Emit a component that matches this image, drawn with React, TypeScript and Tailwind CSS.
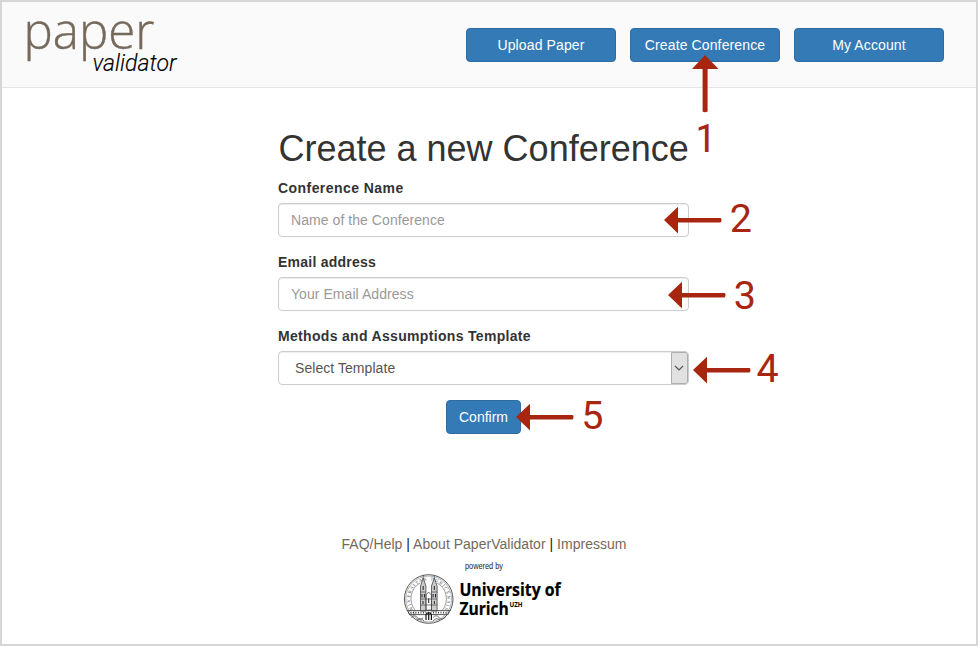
import React from "react";

const navItems = ["Upload Paper", "Create Conference", "My Account"];

function Brand() {
  return (
    <svg className="ml-[18px] mt-2 block h-[70px] w-[170px] overflow-visible" viewBox="20 10 170 70" aria-label="paper validator">
      <text x="23.5" y="49.3" fontSize="50" fontWeight="300" fontFamily="'Open Sans', sans-serif" fill="#75695c" stroke="#75695c" strokeWidth="0.4" textLength="131" lengthAdjust="spacingAndGlyphs">paper</text>
      <text x="92.5" y="71.3" fontSize="24.5" fontWeight="300" fontStyle="italic" fontFamily="Roboto, sans-serif" fill="#000" stroke="#000" strokeWidth="0.15" textLength="84" lengthAdjust="spacingAndGlyphs">validator</text>
    </svg>
  );
}

function Seal() {
  return (
    <g fill="none" stroke="#444">
      <circle cx="428.7" cy="599" r="24.3" strokeWidth="0.9" />
      <circle cx="428.7" cy="599" r="22.9" strokeWidth="0.4" />
      <path id="sealArc" d="M416.2 612.8A18.6 18.6 0 1 1 441.2 612.8" stroke="none" />
      <text fontSize="4.6" fontFamily="'Liberation Serif', serif" fill="#444" stroke="none">
        <textPath href="#sealArc" textLength="84">UNIVERSITAS TURICENSIS</textPath>
      </text>
      <path d="M415 610A18 18 0 0 1 420 583M437 583A18 18 0 0 1 442.5 610" strokeWidth="0.5" />
      <path d="M420.5 611V586l2.7-8 2.7 8v25zM431.5 611v-25l2.8-8 2.8 8v25z" fill="#ccc" strokeWidth="0.8" />
      <path d="M423.2 575v4M434.3 575v4M420.5 592h5.4M431.5 592h5.6M420.5 599h16.5M420.5 605h16.5M426 595l2.7-3 2.7 3v15h-5.4z" strokeWidth="0.7" />
      <path d="M423.2 586v4M434.3 586v4M422 594v3.5M424.4 594v3.5M433.1 594v3.5M435.5 594v3.5M428.7 598.5v4.5M423 601v3M434.3 601v3" stroke="#222" strokeWidth="1" />
      <path d="M406.8 610.6h43.8M409 614.6h39.4" strokeWidth="0.9" />
      <path d="M408 612.6h41.5" strokeWidth="1.8" strokeDasharray="1 1.5" />
      <path d="M411.3 617.5q3-3.5 6 0t6 0M433 617.5q3-3.5 6 0t7-1M417 620q4-3 7 1M433 621q3-4 7-1" strokeWidth="0.7" />
      <path d="M426 620v-5.5q2.7-4 5.4 0v5.5M428.7 612v8" stroke="#111" strokeWidth="1.2" />
    </g>
  );
}

function UniversityLogo() {
  return (
    <svg className="block h-[54px] w-[164px] overflow-visible" viewBox="402 572 164 54" aria-label="University of Zurich">
      <Seal />
      <g fill="#000" fontFamily="'Open Sans', sans-serif" fontWeight="700">
        <text x="459.4" y="596.3" fontSize="17.2" stroke="#000" strokeWidth="0.2" textLength="101.3" lengthAdjust="spacingAndGlyphs">University of</text>
        <text x="459.4" y="615" fontSize="17.2" stroke="#000" strokeWidth="0.2" textLength="49.5" lengthAdjust="spacingAndGlyphs">Zurich</text>
        <text x="509.5" y="606.6" fontSize="7" textLength="13" lengthAdjust="spacingAndGlyphs">UZH</text>
      </g>
    </svg>
  );
}

function Step({ n, className, numberX, numberY = 32.3 }: { n: number; className: string; numberX: number; numberY?: number }) {
  return (
    <svg className={`absolute h-10 w-[100px] overflow-visible ${className}`} viewBox="0 0 100 40" fill="#a82610">
      <path d="M0 20 L14 6.8V18H56.5Q57.5 18 57.5 20T56.5 22.4H14V33.4z" />
      <text x={numberX} y={numberY} fontSize="39.5" fontFamily="Roboto, sans-serif">{n}</text>
    </svg>
  );
}

function Field({ label, placeholder, tracking }: { label: string; placeholder: string; tracking: string }) {
  return (
    <label className="mb-[15px] block">
      <span className={`mb-[5px] block h-5 text-sm leading-5 font-bold ${tracking}`}>{label}</span>
      <input className="block h-[34px] w-full rounded border border-[#ccc] bg-white px-3 text-sm tracking-[0.06px] shadow-[inset_0_1px_1px_rgba(0,0,0,0.075)] placeholder:text-[#999]" placeholder={placeholder} />
    </label>
  );
}

export default function App() {
  return (
    <div className="relative h-[646px] w-[978px] overflow-hidden border-2 border-[#d6d6d6] bg-white font-['Liberation_Sans',Arial,sans-serif] text-[#333]">
      <header className="flex h-[86px] justify-between border-b border-[#e4e4e4] bg-[#fafafa] pr-8">
        <Brand />
        <nav className="flex gap-3.5 pt-[26px]">
          {navItems.map((item) => (
            <button key={item} className="h-[34px] w-[150px] rounded border border-[#2e6da4] bg-[#337ab7] text-sm tracking-[0.12px] text-white">{item}</button>
          ))}
        </nav>
      </header>

      <main className="ml-[276px] w-[411px] pt-[41px]">
        <h1 className="mb-[9px] h-10 pl-[0.5px] text-4xl leading-10 whitespace-nowrap">Create a new Conference</h1>
        <Field label="Conference Name" placeholder="Name of the Conference" tracking="tracking-[0.44px]" />
        <Field label="Email address" placeholder="Your Email Address" tracking="tracking-[0.24px]" />
        <div className="mb-[5px] h-5 text-sm leading-5 font-bold tracking-[0.32px]">Methods and Assumptions Template</div>
        <div className="flex h-[34px] items-stretch justify-between overflow-hidden rounded border border-[#ccc] pl-4 text-sm leading-8 tracking-[0.06px] text-[#555] shadow-[inset_0_1px_1px_rgba(0,0,0,0.075)]">
          <span>Select Template</span>
          <span className="flex w-[17px] items-center justify-center rounded-r-[3px] border border-[#adadad] bg-[#e1e1e1] pr-px">
            <svg className="h-2 w-2.5 shrink-0" viewBox="0 0 10 8" fill="none" stroke="#555" strokeWidth="1.2"><path d="M1 2l4 4 4-4" /></svg>
          </span>
        </div>
        <button className="mt-[15px] ml-[168px] block h-[34px] w-[75px] rounded border border-[#2e6da4] bg-[#337ab7] text-sm text-white">Confirm</button>
      </main>

      <footer className="flex flex-col items-center pt-[100px] pr-2.5">
        <p className="text-sm leading-5 tracking-[0.02px] whitespace-nowrap text-[#222]">
          <a className="text-[#75695c]">FAQ/Help</a> | <a className="text-[#75695c]">About PaperValidator</a> | <a className="text-[#75695c]">Impressum</a>
        </p>
        <svg className="mt-1.5 block h-3 w-10 overflow-visible" viewBox="0 0 40 12"><text x="1" y="9" fontSize="9" fill="#222" textLength="38" lengthAdjust="spacingAndGlyphs">powered by</text></svg>
        <UniversityLogo />
      </footer>

      <svg className="absolute top-[54px] left-[688px] h-[100px] w-8 overflow-visible" viewBox="0 0 32 100" fill="#a82610">
        <clipPath id="stepOneClip"><path d="M8.6 60h20v40h-20z" /></clipPath>
        <path d="M15 -1 L28.5 13H17.6V55.5Q15 57 12.6 55.5V13H2z" />
        <text x="4.4" y="96" fontSize="39.5" fontFamily="Roboto, sans-serif" clipPath="url(#stepOneClip)">1</text>
      </svg>
      <Step n={2} className="top-[198px] left-[662px]" numberX={65.7} />
      <Step n={3} className="top-[273px] left-[666px]" numberX={65.7} numberY={33.6} />
      <Step n={4} className="top-[348px] left-[691px]" numberX={63.6} />
      <Step n={5} className="top-[395px] left-[514px]" numberX={65.3} />
    </div>
  );
}
